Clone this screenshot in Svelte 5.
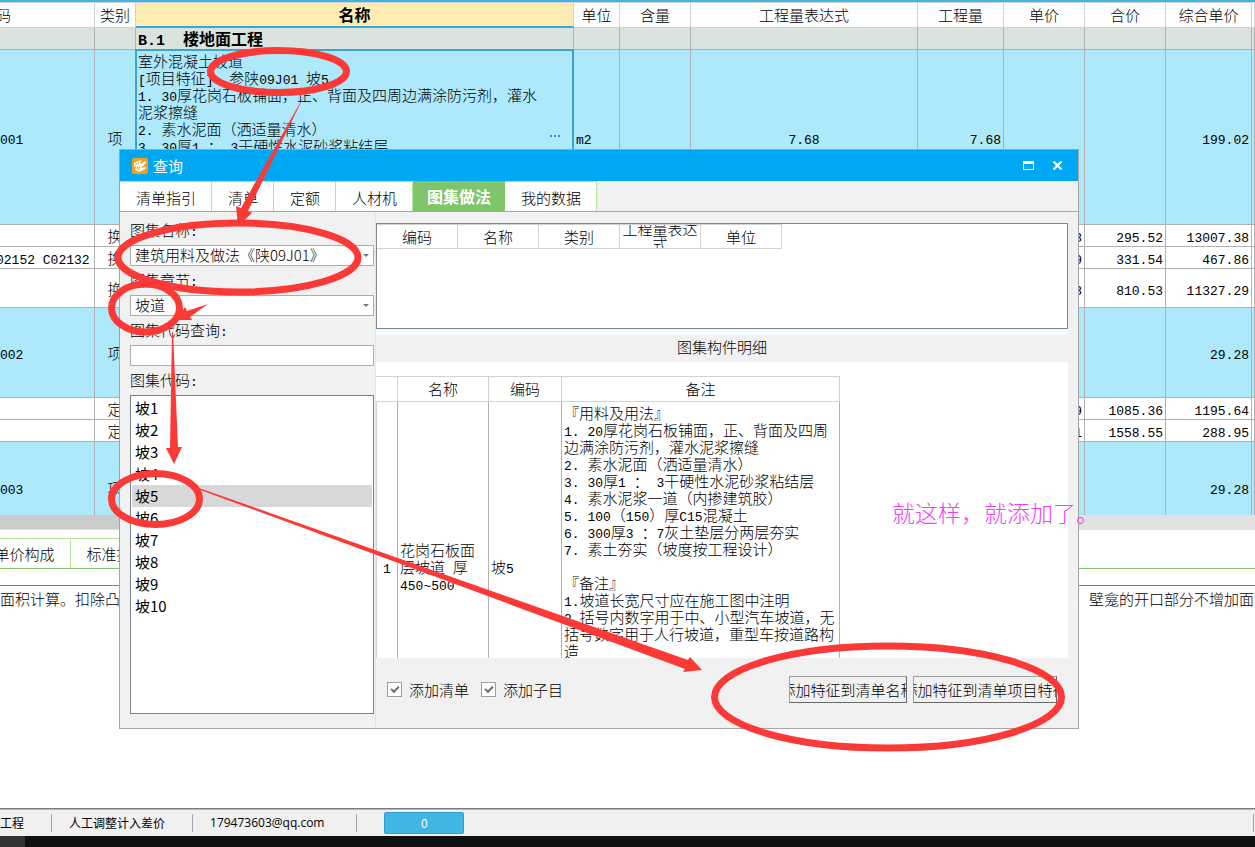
<script>
    const columns = [
        { key: 'code', label: '编码', width: 197 },
        { key: 'type', label: '类别', width: 41 },
        { key: 'name', label: '名称', width: 438 },
        { key: 'unit', label: '单位', width: 46 },
        { key: 'ratio', label: '含量', width: 71 },
        { key: 'expr', label: '工程量表达式', width: 227 },
        { key: 'qty', label: '工程量', width: 86 },
        { key: 'price', label: '单价', width: 81 },
        { key: 'total', label: '合价', width: 81 },
        { key: 'composite', label: '综合单价', width: 86 }
    ];

    const itemText = [
        '室外混凝土坡道',
        '[项目特征]  参陕09J01 坡5',
        '1. 30厚花岗石板铺面，正、背面及四周边满涂防污剂，灌水',
        '泥浆擦缝',
        '2. 素水泥面（洒适量清水）',
        '3. 30厚1 ： 3干硬性水泥砂浆粘结层'
    ].join('\n');

    const rows = [
        { kind: 'group', height: 22, name: 'B.1  楼地面工程' },
        { kind: 'item', height: 175, code: '001', type: '项', name: itemText, unit: 'm2', expr: '7.68', qty: '7.68', composite: '199.02', current: true },
        { kind: 'quota', height: 22, type: '换', price: '8', total: '295.52', composite: '13007.38' },
        { kind: 'quota', height: 22, code: '02152 C02132', type: '换', price: '9', total: '331.54', composite: '467.86' },
        { kind: 'quota', height: 39, type: '换', price: '8', total: '810.53', composite: '11327.29' },
        { kind: 'item', height: 90, code: '002', type: '项', composite: '29.28' },
        { kind: 'quota', height: 22, type: '定', price: '9', total: '1085.36', composite: '1195.64' },
        { kind: 'quota', height: 22, type: '定', price: '1', total: '1558.55', composite: '288.95' },
        { kind: 'item', height: 92, code: '003', type: '项', composite: '29.28' }
    ];

    const tabs = ['清单指引', '清单', '定额', '人材机', '图集做法', '我的数据'];
    let activeTab = $state('图集做法');

    let codeQuery = $state('');
    const codes = ['坡1', '坡2', '坡3', '坡4', '坡5', '坡6', '坡7', '坡8', '坡9', '坡10'];
    let selectedCode = $state('坡5');
    const shownCodes = $derived(codes.filter((code) => code.includes(codeQuery)));

    const resultColumns = ['编码', '名称', '类别', '工程量表达式', '单位'];

    const detailName = '花岗石板面\n层坡道 厚\n450~500';
    const detailNote = [
        '『用料及用法』',
        '1. 20厚花岗石板铺面，正、背面及四周',
        '边满涂防污剂，灌水泥浆擦缝',
        '2. 素水泥面（洒适量清水）',
        '3. 30厚1 ： 3干硬性水泥砂浆粘结层',
        '4. 素水泥浆一道（内掺建筑胶）',
        '5. 100（150）厚C15混凝土',
        '6. 300厚3 ：7灰土垫层分两层夯实',
        '7. 素土夯实（坡度按工程设计）',
        '',
        '『备注』',
        '1.坡道长宽尺寸应在施工图中注明',
        '2.括号内数字用于中、小型汽车坡道，无',
        '括号数字用于人行坡道，重型车按道路构',
        '造'
    ].join('\n');

    const rule = '面积计算。扣除凸出地面构筑物、设备基础、室内铁道、地沟等所占面积，不扣除间壁墙及0.3m2以内的柱、垛、附墙烟囱及孔洞所占面积。门洞、空圈、暖气包槽、壁龛的开口部分不增加面积';

    let addList = $state(true);
    let addSub = $state(true);

    // Latin runs are set in a narrower monospace face than the Chinese text
    function splitRuns(text) {
        return (text ?? '').split(/([\x20-\x7e]+)/).filter(Boolean);
    }
</script>

{#snippet mixed(text)}{#each splitRuns(text) as run}{#if /^[\x20-\x7e]/.test(run)}<span class="latin">{run}</span>{:else}{run}{/if}{/each}{/snippet}

<div class="screen">
    <div class="sheet">
        <table class="bill">
            <colgroup>
                {#each columns as column}
                    <col style="width: {column.width}px" />
                {/each}
                <col />
            </colgroup>
            <thead>
                <tr>
                    {#each columns as column}
                        <th class={column.key}>{column.label}</th>
                    {/each}
                    <th></th>
                </tr>
            </thead>
            <tbody>
                {#each rows as row}
                    <tr class={row.kind} class:current={row.current} style="height: {row.height}px">
                        {#each columns as column}
                            <td class={column.key} class:long={column.key === 'code' && row[column.key]?.length > 3}>{@render mixed(row[column.key])}{#if row.current && column.key === 'name'}<button class="more" aria-label="更多"><i></i><i></i><i></i></button>{/if}</td>
                        {/each}
                        <td></td>
                    </tr>
                {/each}
            </tbody>
        </table>
    </div>
    <div class="scrollbar"><div class="thumb"></div></div>

    <nav class="lower-tabs">
        <button>单价构成</button>
        <button>标准换算</button>
    </nav>
    <div class="rule-text">{@render mixed(rule)}</div>

    <footer class="status">
        <span class="cell first">工程</span>
        <span class="cell">人工调整计入差价</span>
        <span class="cell mail">179473603@qq.com</span>
        <button class="count">0</button>
        <span class="end"></span>
    </footer>
    <div class="taskbar"><div class="start"></div></div>

    <div class="dialog" role="dialog" aria-label="查询">
        <header class="title">
            <svg class="logo" viewBox="0 0 16 16" aria-hidden="true">
                <rect width="16" height="16" rx="2" fill="#f7a01f" />
                <path d="M2 5 L8 2 L10 3 L8 5 L9 6 L13 3 L14 5 L9 10 L14 9 L13 11 L7 14 L3 12 L4 9 L2 8 Z" fill="#fff" />
                <path d="M3 7 L7 4.500 M6 8 L5 11 M8 8.500 L6.500 12" stroke="#f7a01f" stroke-width="1" fill="none" />
            </svg>
            <span class="title-text">查询</span>
            <button aria-label="最大化">
                <svg viewBox="0 0 11 9" width="11" height="9"><path d="M0 0H11V9H0Z M1 3V8H10V3Z" fill="#fff" fill-rule="evenodd" /></svg>
            </button>
            <button aria-label="关闭">
                <svg viewBox="0 0 11 9" width="11" height="9"><path d="M1.500 0.500 L9.500 8.500 M9.500 0.500 L1.500 8.500" stroke="#fff" stroke-width="2.200" /></svg>
            </button>
        </header>

        <nav class="tabs">
            {#each tabs as tab}
                <button class:active={tab === activeTab} onclick={() => (activeTab = tab)}>{tab}</button>
            {/each}
        </nav>

        <div class="panes">
            <div class="filters">
                <label for="atlas">{@render mixed('图集名称:')}</label>
                <div class="drop">
                    <select id="atlas"><option>建筑用料及做法《陕09J01》</option></select>
                </div>
                <label for="chapter">{@render mixed('图集章节:')}</label>
                <div class="drop">
                    <select id="chapter"><option>坡道</option></select>
                </div>
                <label for="query">{@render mixed('图集代码查询:')}</label>
                <input id="query" type="text" bind:value={codeQuery} />
                <span class="caption" id="codes-label">{@render mixed('图集代码:')}</span>
                <ul class="codes" role="listbox" aria-labelledby="codes-label">
                    {#each shownCodes as code}
                        <li role="option" aria-selected={code === selectedCode}>
                            <button class:selected={code === selectedCode} onclick={() => (selectedCode = code)}>{code}</button>
                        </li>
                    {/each}
                </ul>
            </div>

            <div class="content">
                <div class="results">
                    <table>
                        <thead>
                            <tr>
                                {#each resultColumns as label}
                                    <th><div>{label}</div></th>
                                {/each}
                            </tr>
                        </thead>
                    </table>
                </div>
                <div class="splitter"></div>
                <h2>图集构件明细</h2>
                <div class="detail">
                    <table>
                        <colgroup>
                            <col class="c-no" />
                            <col class="c-name" />
                            <col class="c-code" />
                            <col class="c-note" />
                        </colgroup>
                        <thead>
                            <tr><th></th><th>名称</th><th>编码</th><th>备注</th></tr>
                        </thead>
                        <tbody>
                            <tr>
                                <td class="no">{@render mixed('1')}</td>
                                <td>{@render mixed(detailName)}</td>
                                <td>{@render mixed('坡5')}</td>
                                <td class="note">{@render mixed(detailNote)}</td>
                            </tr>
                        </tbody>
                    </table>
                </div>
                <div class="actions">
                    <label><input type="checkbox" bind:checked={addList} />添加清单</label>
                    <label><input type="checkbox" bind:checked={addSub} />添加子目</label>
                    <button class="to-name"><span>添加特征到清单名称</span></button>
                    <button class="to-feature"><span>添加特征到清单项目特征</span></button>
                </div>
            </div>
        </div>
    </div>

    <!-- hand-drawn marks over the windows -->
    <svg class="marks" width="1255" height="847" aria-hidden="true">
        <g fill="none" stroke="#fb3a37" stroke-width="7">
            <ellipse cx="278.500" cy="71.500" rx="68" ry="21" />
            <ellipse cx="238" cy="257.500" rx="120" ry="34.500" />
            <ellipse cx="145.500" cy="308" rx="34" ry="24" />
            <ellipse cx="155.500" cy="499" rx="44" ry="25.500" />
            <ellipse cx="888" cy="697" rx="173.500" ry="51" />
        </g>
        <g fill="#fb3a37">
            <path d="M305 94 L241 208 L236 206 L238 226 L252 213 L248 211 Z" />
            <path d="M208 304 L187 311 L185 307 L175 320 L192 320 L190 317 Z" />
            <path d="M172 332 L170 448 L166 448 L174 464 L182 447 L178 447 L173 332 Z" />
            <path d="M199 488 L688 660 L690 657 L702 670 L683 672 L685 669 L199 489.500 Z" />
        </g>
    </svg>
    <p class="remark">就这样，就添加了。</p>
</div>

<style>
    :global(body) {
        margin: 0;
        background: #fff;
    }

    .screen {
        position: relative;
        display: flex;
        flex-direction: column;
        min-height: 100vh;
        overflow: hidden;
        font-family: "Noto Sans CJK SC", sans-serif;
        font-size: 15px;
        font-weight: 300;
        line-height: 17px;
        color: #000;
    }

    button, input, select {
        font: inherit;
        color: inherit;
        box-sizing: border-box;
        margin: 0;
        padding: 0;
        border: 0;
        border-radius: 0;
        background: none;
    }

    .latin {
        font-family: "Liberation Mono", monospace;
        font-size: 13px;
        line-height: 0;
    }

    table {
        border-collapse: separate;
        border-spacing: 0;
        table-layout: fixed;
    }

    th, td {
        box-sizing: border-box;
        padding: 0;
        font-weight: inherit;
    }

    /* bill of quantities */
    .sheet {
        height: 513px;
        overflow: hidden;
        border-top: 2px solid #41b3e3;
    }

    .bill {
        width: calc(100% + 102px);
        margin-left: -102px;
    }

    .bill th {
        height: 26px;
        padding-bottom: 2px;
        border: solid #d2d2d2;
        border-width: 1px 1px 1px 0;
    }

    .bill th.name {
        padding: 0;
        background: #ffecb3;
        border-bottom: 2px solid #3ba4d2;
        font-size: 16px;
        font-weight: 700;
    }

    .bill td {
        position: relative;
        padding: 0 2px;
        border: solid #b1b1b1;
        border-width: 0 1px 1px 0;
        white-space: pre;
        text-align: right;
    }

    .bill td.code { text-align: left; padding-left: 102px; }
    .bill td.long { text-align: left; padding-left: 98px; padding-right: 0; }
    .bill td.type, .bill td.expr { text-align: center; }
    .bill td.name, .bill td.unit { text-align: left; }

    .group td { background: #dae3de; }
    .group td.name { font-size: 16px; font-weight: 700; }
    .group .latin { font-size: 15px; }
    .item td { background: #ade8fb; }

    .current td.name {
        padding-top: 2px;
        vertical-align: top;
    }

    .current td.name::after {
        content: "";
        position: absolute;
        inset: -1px -1px 0 -1px;
        border: 2px solid #3ba4d2;
    }

    .more {
        position: absolute;
        right: 13px;
        top: 84px;
        display: flex;
        gap: 2px;
        padding: 1px 0;
    }

    .more i { width: 2px; height: 2px; background: #3d8fd0; }

    .scrollbar {
        height: 15px;
        background: #e1e1e1;
    }

    .thumb {
        width: 70%;
        height: 14px;
        background: #cbcbcb;
    }

    .lower-tabs {
        display: flex;
        height: 31px;
        margin-top: 8px;
        padding-right: 22px;
        border-bottom: 1px solid #7fc46a;
        box-sizing: border-box;
    }

    .lower-tabs button {
        width: 92px;
        border: solid #b5e3a0;
        border-width: 1px 1px 0 0;
    }

    .lower-tabs button:first-child { margin-left: -21px; }

    .rule-text {
        flex: 1;
        margin-top: 16px;
        padding-top: 4px;
        border-top: 1px solid #7b7b7b;
        white-space: nowrap;
        overflow: hidden;
    }

    .status {
        display: flex;
        align-items: center;
        height: 28px;
        box-sizing: border-box;
        border-top: 1px solid #7b7b7b;
        box-shadow: inset 0 1px #b5b5b5;
        background: #f0f0f0;
        font-size: 12px;
        font-weight: 400;
        line-height: 18px;
    }

    .cell {
        padding: 0 27px 0 17px;
        border-right: 1px solid #a0a5b1;
    }

    .cell.first { padding-left: 0; }

    .mail {
        padding-right: 32px;
        font-family: "Open Sans", sans-serif;
    }

    .count {
        width: 80px;
        height: 22px;
        margin-left: 27px;
        border: 1px solid #2c9dcc;
        border-radius: 2px;
        background: #41b5e3;
        color: #fff;
    }

    .end {
        height: 18px;
        margin-left: auto;
        margin-right: 1px;
        border-left: 1px solid #a0a5b1;
    }

    .taskbar { height: 11px; background: #101010; }
    .start { width: 25px; height: 11px; background: #333; }

    /* query window */
    .dialog {
        position: absolute;
        left: 119px;
        top: 149px;
        width: 960px;
        height: 580px;
        box-sizing: border-box;
        display: flex;
        flex-direction: column;
        border: 1px solid #a5a5a5;
        background: #f1f1f1;
    }

    .title {
        display: flex;
        align-items: center;
        gap: 18px;
        height: 31px;
        padding: 0 15px 0 12px;
        background: #00a8f3;
        color: #fff;
        font-weight: 400;
    }

    .logo { width: 16px; height: 16px; }
    .title-text { flex: 1; margin-left: -13px; }
    .title button { display: flex; }

    .tabs {
        display: flex;
        height: 31px;
        box-sizing: border-box;
        border-bottom: 1px solid #7fc46a;
    }

    .tabs button {
        padding: 1px 15px 0 16px;
        border: solid #b5e3a0;
        border-width: 1px 1px 0 0;
        background: #fff;
    }

    .tabs .active {
        padding: 0 13px 0 14px;
        border-color: #80c46b;
        background: #80c46b;
        color: #fff;
        font-size: 16px;
        font-weight: 700;
    }

    .panes { flex: 1; display: flex; min-height: 0; }

    .filters {
        display: flex;
        flex-direction: column;
        width: 256px;
        box-sizing: border-box;
        padding: 4px 1px 14px 10px;
        border-right: 1px solid #dbe9ef;
    }

    .filters label, .caption {
        height: 29px;
        line-height: 27px;
    }

    .filters > input, .filters select {
        display: block;
        width: 100%;
        height: 21px;
        padding: 0 4px 2px;
        border: 1px solid #acacac;
        background: #fff;
    }

    .filters select { appearance: none; }
    .drop { position: relative; }

    .drop::after {
        content: "";
        position: absolute;
        right: 5px;
        top: 9px;
        border: solid transparent;
        border-width: 3px 3px 0;
        border-top-color: #71778a;
        pointer-events: none;
    }

    .codes {
        flex: 1;
        margin: 0;
        padding: 1px;
        list-style: none;
        border: 1px solid #7d838c;
        background: #fff;
        font-weight: 400;
    }

    .codes button {
        display: block;
        width: 100%;
        height: 22px;
        padding: 0 3px 2px;
        text-align: left;
    }

    .codes .selected { background: #d8d8d8; }

    .content {
        flex: 1;
        display: flex;
        flex-direction: column;
        min-width: 0;
        padding-top: 11px;
        padding-right: 10px;
    }

    .results {
        height: 106px;
        box-sizing: border-box;
        border: 1px solid #83838f;
        background: #fff;
    }

    .results table { width: 405px; }

    .results th {
        border: solid #d2d2d2;
        border-width: 1px 1px 1px 0;
    }

    .results th div {
        display: flex;
        align-items: center;
        justify-content: center;
        height: 22px;
        padding-bottom: 1px;
        line-height: 15px;
        overflow: hidden;
    }

    .splitter { height: 6px; background: #f0fcff; }

    h2 {
        margin: 0;
        height: 27px;
        font-size: 15px;
        font-weight: inherit;
        line-height: 23px;
        text-align: center;
    }

    .detail {
        height: 296px;
        box-sizing: border-box;
        padding-top: 14px;
        background: #fff;
        overflow: hidden;
    }

    .detail table { width: 464px; }
    .c-no { width: 22px; }
    .c-name { width: 91px; }
    .c-code { width: 73px; }
    .c-note { width: 278px; }

    .detail th {
        height: 26px;
        padding-bottom: 2px;
        border: solid #d2d2d2;
        border-width: 1px 1px 1px 0;
    }

    .detail td {
        height: 328px;
        padding: 0 2px;
        border-right: 1px solid #b1b1b1;
        white-space: pre;
    }

    .detail td.no { text-align: center; border-left: 1px solid #d2d2d2; }
    .detail td.note { padding-top: 2px; vertical-align: top; }

    .actions {
        display: flex;
        align-items: center;
        gap: 12px;
        height: 27px;
        padding: 18px 11px 0 11px;
    }

    .actions label {
        display: flex;
        align-items: center;
        gap: 7px;
    }

    .actions input {
        appearance: none;
        display: grid;
        place-items: center;
        width: 15px;
        height: 15px;
        border: 1px solid #a0a0a0;
        background: #fff;
    }

    .actions input:checked::before {
        content: "";
        width: 6px;
        height: 3px;
        margin-bottom: 2px;
        border: solid #686878;
        border-width: 0 0 2px 2px;
        transform: rotate(-45deg);
    }

    .actions button {
        display: flex;
        justify-content: center;
        align-items: center;
        height: 27px;
        border: 1px solid #a0a0a0;
        border-bottom-color: #696969;
        border-right-color: #696969;
        white-space: nowrap;
        overflow: hidden;
    }

    .to-name { width: 118px; margin-left: auto; }
    .to-feature { width: 144px; margin-left: -6px; }

    .marks {
        position: absolute;
        left: 0;
        top: 0;
        pointer-events: none;
    }

    .remark {
        position: absolute;
        left: 892px;
        top: 498px;
        margin: 0;
        font-size: 23px;
        line-height: 28px;
        color: #f43cf4;
        white-space: nowrap;
        pointer-events: none;
    }
</style>
